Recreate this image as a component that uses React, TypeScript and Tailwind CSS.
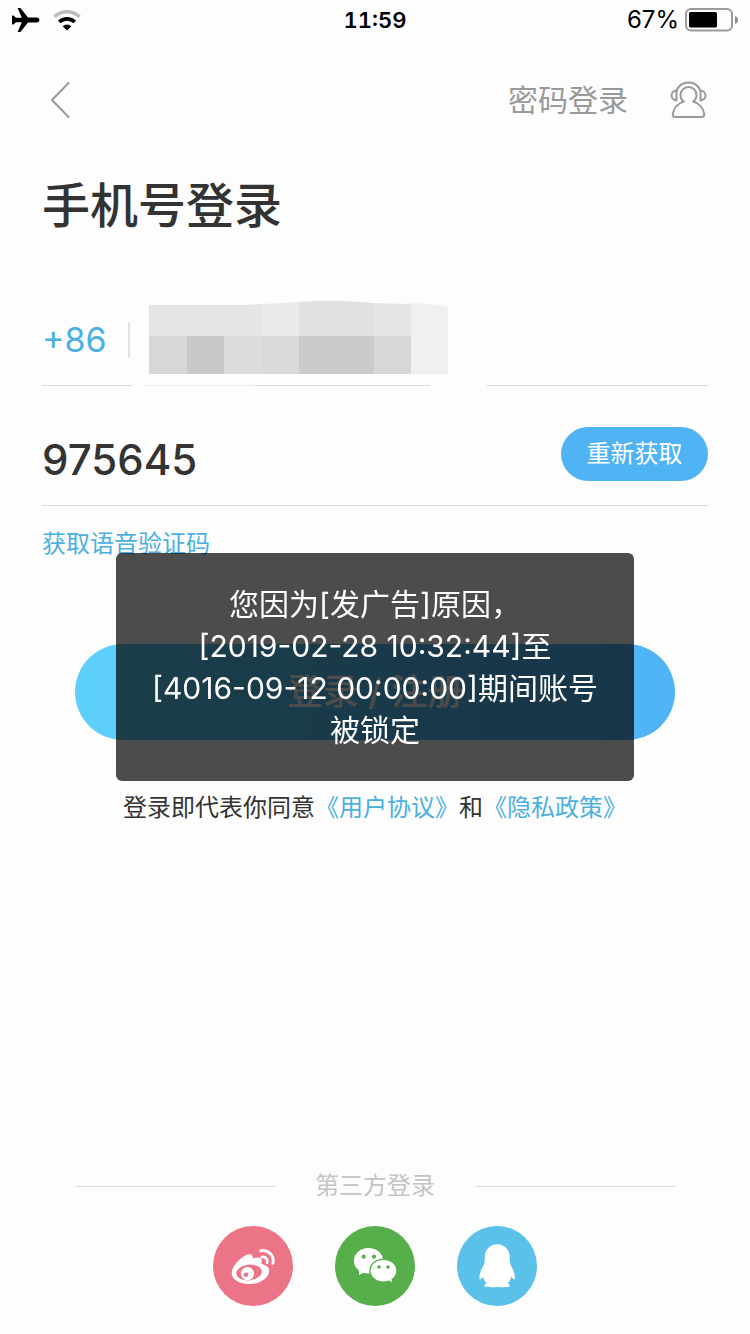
import React from "react";

function StatusBar() {
  return (
    <div className="grid h-10 grid-cols-3 items-center px-3 text-black">
      <div className="flex items-center gap-3">
        <svg width="28" height="26" viewBox="0 0 28 26" aria-label="Airplane mode">
          <path d="M0 8.500h1.300l2.800 2.300h5.700L5.600 1h2.800l7.600 9.600h8.600c1.800 0 2.800 1.100 2.800 2.400s-1 2.400-2.800 2.400H16L8.400 25H5.600l4.200-9.800H4.100l-2.800 2.300H0z" />
        </svg>
        <svg width="30" height="22" viewBox="0 0 30 22" fill="none" aria-label="Wi-Fi">
          <path d="M2.500 7.800a18 18 0 0 1 25 0" stroke="#bdbdbd" strokeWidth="3.600" />
          <path d="M7.300 13a11 11 0 0 1 15.400 0" stroke="#000" strokeWidth="3.800" />
          <path d="M15 21.500l-4.300-4.200a6 6 0 0 1 8.600 0z" fill="#000" />
        </svg>
      </div>
      <span className="text-center text-[22px] font-semibold tabular-nums">11:59</span>
      <div className="flex items-center justify-end gap-1.5">
        <span className="text-2xl">67%</span>
        <svg width="53" height="24" viewBox="0 0 53 24" aria-label="Battery">
          <rect x="1" y="1" width="46" height="21.500" rx="5" fill="none" stroke="#9b9b9b" strokeWidth="2" />
          <rect x="4" y="4" width="28" height="15.500" rx="1.500" />
          <path d="M50 8c2 .8 3 2.200 3 4s-1 3.200-3 4z" fill="#8a8a8a" />
        </svg>
      </div>
    </div>
  );
}

function Header() {
  return (
    <header className="flex h-[120px] items-center justify-between px-[42px] text-[#999]">
      <button type="button" aria-label="返回" className="pl-2">
        <svg width="20" height="36" viewBox="0 0 20 36" fill="none" stroke="currentColor" strokeWidth="2">
          <path d="M18.500 1L2 18l16.500 17" strokeLinecap="round" strokeLinejoin="round" />
        </svg>
      </button>
      <div className="flex items-center gap-[42px]">
        <a href="#password" className="text-[30px] text-[#999]">密码登录</a>
        <button type="button" aria-label="客服">
          <svg width="38" height="38" viewBox="0 0 38 38" fill="none" stroke="currentColor" strokeWidth="2" strokeLinejoin="round">
            <path d="M6.500 10C8.500 4.800 13 1.500 18.500 1.500S28.500 4.800 30.500 10" />
            <path d="M6.500 9.500C3.500 9.700 1.500 12 1.500 14.500s2 4.700 5 5z" />
            <path d="M30.500 9.500c3 .2 5 2.500 5 5s-2 4.700-5 5z" />
            <path d="M13.800 20.500C11.400 19 10.500 16.500 10.500 14a8 8 0 0 1 16 0c0 2.500-.9 5-3.300 6.500 5.600 1.800 10.200 6.500 11 12.300.3 2.200-.8 3.200-2.700 3.200H5.500c-1.900 0-3-1-2.700-3.200.8-5.800 5.400-10.500 11-12.300z" />
          </svg>
        </button>
      </div>
    </header>
  );
}

// phone number hidden behind a mosaic
function MaskedNumber() {
  return (
    <svg width="368" height="92" viewBox="0 0 368 92" className="absolute top-1 left-[90px]" aria-label="手机号">
      <path d="M0 84h123v7H0zM298 84h57v7H298z" fill="#fdfdfd" />
      <path d="M12 87.500h111" stroke="#ececec" />
      <path d="M17 7h96l17-1v32H17z" fill="#e5e5e5" />
      <path d="M130 6l37-2v34h-37z" fill="#eaeaea" />
      <path d="M167 4q30-3 75 1v33h-75z" fill="#e1e1e1" />
      <path d="M242 5l37 1v32h-37z" fill="#e6e6e6" />
      <path d="M279 5q20 0 37 4v67h-37z" fill="#f0f0f0" />
      <path d="M17 38h38v38H17z" fill="#d7d7d7" />
      <path d="M55 38h37v38H55z" fill="#c8c8c8" />
      <path d="M92 38h38v38H92z" fill="#dddddd" />
      <path d="M130 38h37v38h-37z" fill="#dadada" />
      <path d="M167 38h75v38h-75z" fill="#cbcbcb" />
      <path d="M242 38h37v38h-37z" fill="#d8d8d8" />
    </svg>
  );
}

function WeiboIcon() {
  return (
    <svg width="80" height="80" viewBox="0 0 80 80" fill="#fff">
      <path d="M35.500 28.300c3-.6 4.800 1.200 4.200 4.200 4.500-1.500 8.300-1.400 9 1.200.3 1.500-.4 2.700-.2 4 2.500 1 7.700 2.200 7.700 7.100 0 6.800-9 13.300-19.300 13.300-10.200 0-18.200-4.500-18.200-10.900 0-6.800 9.600-17.400 16.800-18.900z" />
      <ellipse cx="36" cy="46.500" rx="12.800" ry="7.800" fill="#eb7587" transform="rotate(-6 36 46.500)" />
      <circle cx="34.500" cy="47.600" r="6.600" />
      <circle cx="33" cy="48.700" r="2.300" fill="#eb7587" />
      <g fill="none" stroke="#fff" strokeLinecap="round">
        <path d="M47.800 24.800c7.500-1.300 14 4.800 12 12.600" strokeWidth="3" />
        <path d="M48.800 31c3.600-.7 6.200 2 5.300 5.600" strokeWidth="2.800" />
      </g>
    </svg>
  );
}

function WechatIcon() {
  return (
    <svg width="80" height="80" viewBox="0 0 80 80" fill="#fff">
      <ellipse cx="33.500" cy="34.700" rx="14.600" ry="12.800" />
      <path d="M24 42l0 7 7-3.500z" />
      <g stroke="#57af4b" strokeWidth="1.400">
        <path d="M48.500 33.200c7.600 0 13.500 5.200 13.500 11.500 0 3.600-1.900 6.600-4.700 8.700l1.200 4.300-4.700-2.500c-1.700.6-3.400.9-5.300.9-7.600 0-13.500-5.100-13.500-11.400s5.900-11.500 13.500-11.500z" />
      </g>
      <g fill="#57af4b">
        <circle cx="28.700" cy="30.700" r="2.100" />
        <circle cx="39" cy="30.700" r="2.100" />
        <circle cx="44" cy="41" r="1.800" />
        <circle cx="53" cy="41" r="1.800" />
      </g>
    </svg>
  );
}

function QqIcon() {
  return (
    <svg width="80" height="80" viewBox="0 0 80 80" fill="#fff">
      <path d="M40.300 18.300c7 0 12 5 12.300 12 0 2.500-.1 4 .3 6 .3 2.200 1.600 4 2.700 6.500 1.700 3.800 2.700 7.500 2.200 10.500-1.500 0-2.700-1.300-3.500-2.800-.4 2.700-1.700 5-3.600 6.800 1.600.7 2.300 2 1.600 3.500-3 .5-8.500.5-12 .1-3.500.4-9.500.4-12.500-.1-.6-1.600.3-2.800 2-3.500-2-1.800-3.200-4.100-3.700-6.800-.8 1.500-2 2.800-3.500 2.800-.5-3 .5-6.700 2.200-10.500 1.100-2.500 2.500-4.300 2.800-6.500.3-2 .2-3.500.3-6 .3-7 5.400-12 12.400-12z" />
    </svg>
  );
}

function ThirdParty() {
  return (
    <footer className="mt-auto px-[75px] pb-7">
      <div className="flex items-center">
        <span className="h-px flex-1 bg-[#dcdcdc]" />
        <span className="w-[200px] text-center text-2xl text-[#c4c4c4]">第三方登录</span>
        <span className="h-px flex-1 bg-[#dcdcdc]" />
      </div>
      <div className="mt-6 flex justify-center gap-[42px]">
        <button type="button" aria-label="微博" className="size-20 rounded-full bg-[#eb7587]">
          <WeiboIcon />
        </button>
        <button type="button" aria-label="微信" className="size-20 rounded-full bg-[#57af4b]">
          <WechatIcon />
        </button>
        <button type="button" aria-label="QQ" className="size-20 rounded-full bg-[#5bc1e9]">
          <QqIcon />
        </button>
      </div>
    </footer>
  );
}

function Toast() {
  return (
    <div className="pointer-events-none fixed inset-0 flex items-center justify-center">
      <p role="alert" className="w-[69%] rounded-md bg-black/70 py-[30px] text-center text-[30px] leading-[42px] whitespace-nowrap text-white">
        您因为[发广告]原因，
        <br />
        [2019-02-28 10:32:44]至
        <br />
        [4016-09-12 00:00:00]期间账号
        <br />
        被锁定
      </p>
    </div>
  );
}

export default function App() {
  return (
    <div lang="zh-CN" className="flex min-h-screen flex-col bg-[#fdfdfd] font-['Inter','Noto_Sans_CJK_SC',sans-serif] text-[#333]">
      <StatusBar />
      <Header />

      <main className="px-[42px]">
        <h1 className="mt-4 text-5xl leading-[60px] font-medium">手机号登录</h1>

        <form onSubmit={(e) => e.preventDefault()}>
          <div className="relative mt-[58px] flex h-[92px] items-center border-b border-[#d8d8d8]">
            <span className="w-[86px] text-[34px] text-[#4bb0df]">+86</span>
            <span className="h-9 w-0.5 bg-[#e2e2e2]" />
            <MaskedNumber />
          </div>

          <div className="flex h-[120px] items-center justify-between border-b border-[#d8d8d8] pt-4">
            <input
              type="text"
              aria-label="验证码"
              defaultValue="975645"
              className="w-72 bg-transparent pt-3 text-[42px] leading-[48px] font-medium outline-none"
            />
            <button type="button" className="h-[54px] w-[147px] rounded-full bg-[#50b4f4] text-2xl text-white">
              重新获取
            </button>
          </div>

          <a href="#voice" className="mt-5 block text-2xl leading-9 text-[#4bb0df]">
            获取语音验证码
          </a>

          <div className="mt-[82px] px-[33px]">
            <button type="submit" className="h-24 w-full rounded-full bg-linear-to-r from-[#5dd0f9] to-[#4fb3f6] text-4xl font-medium text-white">
              登录 / 注册
            </button>
          </div>
        </form>

        <p className="mt-[50px] text-center text-2xl leading-9">
          登录即代表你同意
          <a href="#terms" className="text-[#4bb0df]">《用户协议》</a>
          和
          <a href="#privacy" className="text-[#4bb0df]">《隐私政策》</a>
        </p>
      </main>

      <ThirdParty />
      <Toast />
    </div>
  );
}
